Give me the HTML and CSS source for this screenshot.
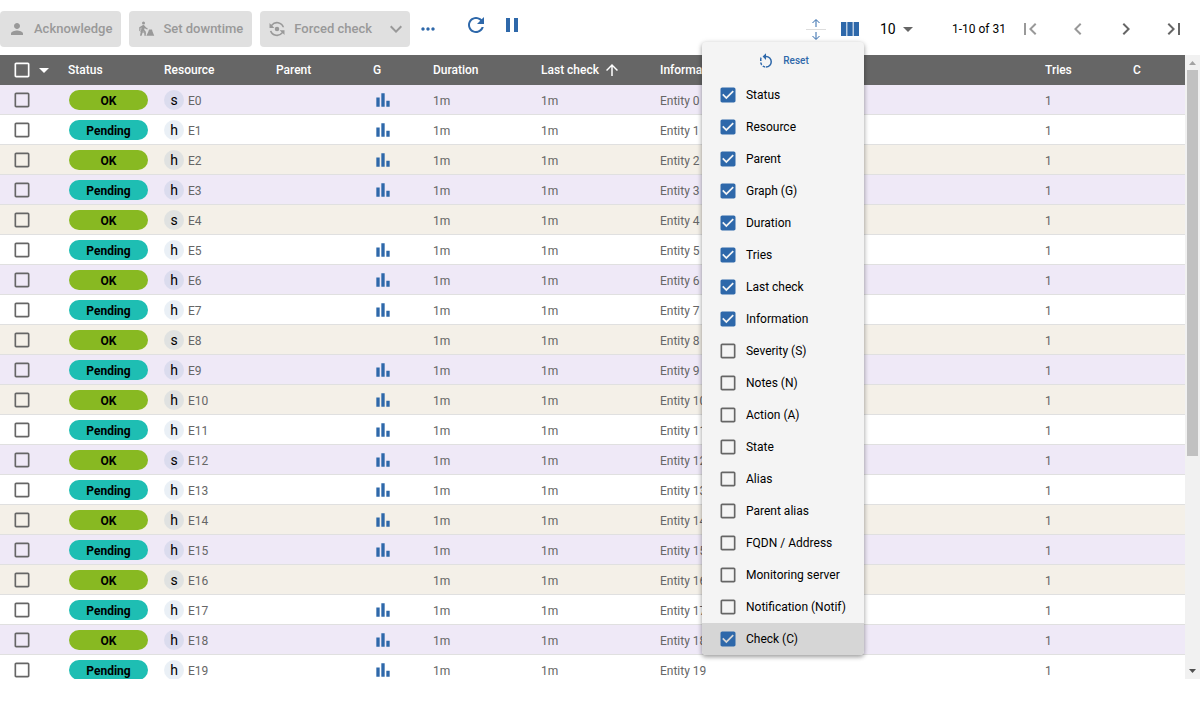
FILE: index.html
```
<!DOCTYPE html>
<html lang="en">
<head>
<meta charset="utf-8">
<meta name="viewport" content="width=device-width, initial-scale=1">
<title>Resources</title>
<link rel="stylesheet" href="styles.css">
</head>
<body>
<svg class="sprite" aria-hidden="true">
  <symbol id="graph" viewBox="0 0 24 24"><path d="M4 9h4v11H4zM16 13h4v7h-4zM10 4h4v16h-4z"/></symbol>
  <symbol id="host" viewBox="0 0 24 24"><path d="M12 12c2.200 0 4-1.800 4-4s-1.800-4-4-4-4 1.800-4 4 1.800 4 4 4zm0 2c-2.670 0-8 1.340-8 4v2h16v-2c0-2.660-5.330-4-8-4z"/></symbol>
</svg>
<main class="page">
  <header class="toolbar">
    <div class="actions">
      <button class="action" type="button" disabled>
        <svg class="icon-18" viewBox="0 0 24 24"><use href="#host"/></svg>
        <span>Acknowledge</span>
      </button>
      <button class="action" type="button" disabled>
        <svg class="icon-18" viewBox="0 0 24 24"><circle cx="8.700" cy="4" r="2"/><path d="M7.500 7 3 9.500V14h1.800v-3.300l1.200-.6L4 21h2.200l1.800-6 1.800 2v4h2v-5.200L9.600 13l.7-2.500 1.500 1.500 2.200.6v-1.800l-1.500-.5L9.800 7.400C9 6.700 8.300 6.600 7.500 7z"/><path d="M3 13.500 12 18l-.4.800L2.600 14.300zM12.500 21l2.500-5.500 1-3h4l.8 3L23 21z"/></svg>
        <span>Set downtime</span>
      </button>
      <div class="action split">
        <button class="split-main" type="button" disabled>
          <svg class="icon-18" viewBox="0 0 24 24"><path d="M21.500 9.500A10 10 0 0 0 4.200 6.200L2 4v6.500h6.500L5.700 7.700a8 8 0 0 1 13.700 2.100zM2.500 14.500a10 10 0 0 0 17.300 3.300L22 20v-6.500h-6.500l2.800 2.800a8 8 0 0 1-13.700-2.100z"/><circle cx="12" cy="12" r="3"/></svg>
          <span>Forced check</span>
        </button>
        <button class="split-toggle" type="button" aria-label="Check options" disabled>
          <svg class="icon-24" viewBox="0 0 24 24"><path d="M7.410 8.590 12 13.170l4.590-4.580L18 10l-6 6-6-6z"/></svg>
        </button>
      </div>
      <button class="icon-button more" type="button" aria-label="More actions">
        <svg class="icon-20" viewBox="0 0 24 24"><path d="M6 10c-1.100 0-2 .9-2 2s.9 2 2 2 2-.9 2-2-.9-2-2-2zm12 0c-1.100 0-2 .9-2 2s.9 2 2 2 2-.9 2-2-.9-2-2-2zm-6 0c-1.100 0-2 .9-2 2s.9 2 2 2 2-.9 2-2-.9-2-2-2z"/></svg>
      </button>
      <div class="refresh">
        <button class="icon-button" type="button" aria-label="Refresh">
          <svg class="icon-24" viewBox="0 0 24 24"><path d="M17.650 6.350C16.200 4.900 14.210 4 12 4c-4.420 0-7.990 3.580-7.990 8s3.570 8 7.990 8c3.730 0 6.840-2.550 7.730-6h-2.080c-.82 2.330-3.040 4-5.650 4-3.310 0-6-2.690-6-6s2.690-6 6-6c1.660 0 3.140.69 4.220 1.780L13 11h7V4l-2.350 2.350z"/></svg>
        </button>
        <button class="icon-button" type="button" aria-label="Pause">
          <svg class="icon-24" viewBox="0 0 24 24"><path d="M6 19h4V5H6v14zm8-14v14h4V5h-4z"/></svg>
        </button>
      </div>
    </div>
    <div class="view-tools">
      <button class="icon-button density" type="button" aria-label="Row density">
        <svg class="icon-20" viewBox="0 0 20 24"><path d="M0 12.500h20" stroke="#ddd"/><path d="M10 10V3M6.500 6 10 2.500 13.500 6M10 15v7M6.500 19l3.500 3.500 3.500-3.500" fill="none" stroke="currentColor"/></svg>
      </button>
      <div class="columns">
        <button class="icon-button columns-button" type="button" aria-label="Select columns">
          <svg class="icon-24" viewBox="0 0 24 24"><path d="M14.670 5v14H9.330V5h5.340zm1 14H21V5h-5.330v14zm-7.340 0V5H3v14h5.330z"/></svg>
        </button>
        <div class="menu">
          <button class="reset" type="button">
            <svg class="icon-18" viewBox="0 0 24 24"><path d="M12 5V1.500L7.500 6 12 10.500V7a6 6 0 0 1 0 12v2a8 8 0 0 0 0-16zM6.300 8.200 4.900 6.800A8 8 0 0 0 4.060 12H6.080c.1-1.400-.6-2.600.22-3.800zM4.060 14c.2 1.400.7 2.700 1.600 3.900l1.430-1.430A6 6 0 0 1 6.080 14zM7.100 19.300A8 8 0 0 0 11 20.900v-2a6 6 0 0 1-2.480-1.030z"/></svg>
            <span>Reset</span>
          </button>
          <label class="option"><input class="check" type="checkbox" checked>Status</label>
          <label class="option"><input class="check" type="checkbox" checked>Resource</label>
          <label class="option"><input class="check" type="checkbox" checked>Parent</label>
          <label class="option"><input class="check" type="checkbox" checked>Graph (G)</label>
          <label class="option"><input class="check" type="checkbox" checked>Duration</label>
          <label class="option"><input class="check" type="checkbox" checked>Tries</label>
          <label class="option"><input class="check" type="checkbox" checked>Last check</label>
          <label class="option"><input class="check" type="checkbox" checked>Information</label>
          <label class="option"><input class="check" type="checkbox">Severity (S)</label>
          <label class="option"><input class="check" type="checkbox">Notes (N)</label>
          <label class="option"><input class="check" type="checkbox">Action (A)</label>
          <label class="option"><input class="check" type="checkbox">State</label>
          <label class="option"><input class="check" type="checkbox">Alias</label>
          <label class="option"><input class="check" type="checkbox">Parent alias</label>
          <label class="option"><input class="check" type="checkbox">FQDN / Address</label>
          <label class="option"><input class="check" type="checkbox">Monitoring server</label>
          <label class="option"><input class="check" type="checkbox">Notification (Notif)</label>
          <label class="option current"><input class="check" type="checkbox" checked>Check (C)</label>
        </div>
      </div>
      <div class="page-size">
        <select aria-label="Rows per page"><option>10</option><option>20</option><option>30</option></select>
        <svg class="icon-24" viewBox="0 0 24 24"><path d="m7 10 5 5 5-5z"/></svg>
      </div>
      <span class="range">1-10 of 31</span>
      <nav class="pager" aria-label="Pagination">
        <button type="button" aria-label="First page" disabled><svg class="icon-24" viewBox="0 0 24 24"><path d="M18.410 16.590 13.820 12l4.590-4.590L17 6l-6 6 6 6zM6 6h2v12H6z"/></svg></button>
        <button type="button" aria-label="Previous page" disabled><svg class="icon-24" viewBox="0 0 24 24"><path d="M15.410 7.410 14 6l-6 6 6 6 1.410-1.410L10.830 12z"/></svg></button>
        <button type="button" aria-label="Next page"><svg class="icon-24" viewBox="0 0 24 24"><path d="M10 6 8.590 7.410 13.170 12l-4.580 4.590L10 18l6-6z"/></svg></button>
        <button type="button" aria-label="Last page"><svg class="icon-24" viewBox="0 0 24 24"><path d="M5.590 7.410 10.180 12l-4.590 4.590L7 18l6-6-6-6zM16 6h2v12h-2z"/></svg></button>
      </nav>
    </div>
  </header>
  <section class="listing">
    <div class="table-area">
      <table>
        <colgroup>
          <col class="col-select"><col class="col-status"><col class="col-resource"><col class="col-parent"><col class="col-graph"><col class="col-duration"><col class="col-last"><col><col class="col-tries"><col class="col-check">
        </colgroup>
        <thead>
          <tr>
            <th><div class="select-all"><input class="check light" type="checkbox" aria-label="Select all"><button type="button" aria-label="Selection options"><svg class="icon-24" viewBox="0 0 24 24"><path d="m7 10 5 5 5-5z"/></svg></button></div></th>
            <th>Status</th><th>Resource</th><th>Parent</th><th>G</th><th>Duration</th>
            <th aria-sort="ascending"><div class="sorted">Last check<svg class="icon-18" viewBox="0 0 24 24"><path d="m4 12 1.410 1.410L11 7.830V20h2V7.830l5.580 5.590L20 12l-8-8z"/></svg></div></th>
            <th>Information</th><th>Tries</th><th>C</th>
          </tr>
        </thead>
        <tbody id="rows"></tbody>
      </table>
    </div>
    <div class="scrollbar" aria-hidden="true">
      <svg viewBox="0 0 15 15"><path d="M4 10h7L7.500 6z" fill="#a3a3a3"/></svg>
      <div class="track"><div class="thumb"></div></div>
      <svg viewBox="0 0 15 15"><path d="M4 5h7L7.500 9z" fill="#505050"/></svg>
    </div>
  </section>
</main>
<script src="app.js"></script>
</body>
</html>
```
FILE: styles.css
```
* { box-sizing: border-box; }

body {
  margin: 0;
  background: #fff;
  color: #000;
  font: 12px/16px Roboto, "Liberation Sans", sans-serif;
}

button, input, select { margin: 0; font: inherit; color: inherit; }
button { padding: 0; border: 0; background: none; }
svg { display: block; flex: none; fill: currentColor; }

.sprite { position: absolute; width: 0; height: 0; }
.icon-18 { width: 18px; height: 18px; }
.icon-20 { width: 20px; height: 20px; }
.icon-24 { width: 24px; height: 24px; }

.page {
  display: flex;
  flex-direction: column;
  height: 100vh;
  padding-bottom: 41px;
}

.toolbar {
  display: flex;
  align-items: center;
  justify-content: space-between;
  height: 55px;
  padding: 3px 2px 0 0;
}

.actions, .view-tools, .refresh, .pager { display: flex; align-items: center; }

.action {
  display: flex;
  align-items: center;
  gap: 8px;
  height: 36px;
  margin-right: 8px;
  padding: 0 9px 0 8px;
  border-radius: 4px;
  background: #e0e0e0;
  color: #999;
  font-size: 13px;
  font-weight: 500;
}

.split { gap: 0; padding-right: 2px; }
.split-main { display: flex; align-items: center; gap: 8px; }
.split-toggle { margin-left: 12px; }

.icon-button { display: flex; align-items: center; justify-content: center; color: #2e68aa; }
.more { width: 20px; }
.refresh { gap: 12px; margin-left: 26px; padding-bottom: 8px; }

.density { width: 20px; }
.density svg { height: 24px; }
.columns { position: relative; margin-left: 10px; }
.columns-button { width: 28px; height: 24px; }

.menu {
  position: absolute;
  z-index: 2;
  top: 25px;
  right: 0;
  width: max-content;
  min-width: 162px;
  border-radius: 4px;
  background: #f4f4f4;
  box-shadow: 0 2px 4px rgba(0, 0, 0, .3), 0 1px 6px rgba(0, 0, 0, .14);
  overflow: hidden;
}

.reset {
  display: flex;
  align-items: center;
  justify-content: center;
  gap: 8px;
  width: 100%;
  height: 37px;
  color: #2e68aa;
  font-size: 10px;
  font-weight: 500;
}

.option {
  display: flex;
  align-items: center;
  gap: 8px;
  height: 32px;
  padding: 0 16px;
}

.current { background: #d6d6d6; }

.check {
  appearance: none;
  flex: none;
  display: block;
  width: 20px;
  height: 20px;
  background: url("data:image/svg+xml,%3Csvg xmlns='http://www.w3.org/2000/svg' viewBox='0 0 24 24' fill='%23666'%3E%3Cpath d='M19 5v14H5V5h14m0-2H5c-1.100 0-2 .9-2 2v14c0 1.100.9 2 2 2h14c1.100 0 2-.9 2-2V5c0-1.100-.9-2-2-2z'/%3E%3C/svg%3E") center / 20px no-repeat;
}

.check.light {
  background-image: url("data:image/svg+xml,%3Csvg xmlns='http://www.w3.org/2000/svg' viewBox='0 0 24 24' fill='%23fff'%3E%3Cpath d='M19 5v14H5V5h14m0-2H5c-1.100 0-2 .9-2 2v14c0 1.100.9 2 2 2h14c1.100 0 2-.9 2-2V5c0-1.100-.9-2-2-2z'/%3E%3C/svg%3E");
}

.check:checked {
  background-image: url("data:image/svg+xml,%3Csvg xmlns='http://www.w3.org/2000/svg' viewBox='0 0 24 24' fill='%232e68aa'%3E%3Cpath d='M19 3H5c-1.110 0-2 .9-2 2v14c0 1.100.89 2 2 2h14c1.110 0 2-.9 2-2V5c0-1.100-.89-2-2-2zm-9 14l-5-5 1.410-1.410L10 14.170l7.590-7.590L19 8l-9 9z'/%3E%3C/svg%3E");
}

.page-size { display: flex; align-items: center; margin-left: 16px; color: #666; }
.page-size select {
  appearance: none;
  width: 16px;
  padding: 0;
  border: 0;
  background: none;
  color: #000;
  font-size: 14px;
}

.range { margin-left: 32px; }
.pager button { display: grid; place-items: center; width: 48px; height: 24px; color: #666; }
.pager button:disabled { color: #999; }

.listing { display: flex; flex: 1; min-height: 0; }
.table-area { flex: 1; min-width: 0; overflow: hidden; }

table { width: 100%; table-layout: fixed; border-collapse: separate; border-spacing: 0; }
.col-select { width: 68px; }
.col-status { width: 96px; }
.col-resource { width: 112px; }
.col-parent { width: 97px; }
.col-graph { width: 60px; }
.col-duration { width: 108px; }
.col-last { width: 119px; }
.col-tries { width: 88px; }
.col-check { width: 52px; }

th, td { height: 30px; padding: 0; text-align: left; white-space: nowrap; }
th { background: #666; color: #fff; font-weight: 500; }
td { border-bottom: 1px solid #e0e0e0; color: #666; }

.even td { background: #f4f0e8; }
.highlight td { background: #efe9f7; }

td.text, .name { padding-top: 2px; }

.select-all { display: flex; align-items: center; padding-left: 12px; }
.sorted { display: flex; align-items: center; gap: 4px; }
td .check { margin-left: 12px; }
td .icon-20 { color: #2e68aa; }

.status {
  width: 79px;
  height: 20px;
  margin-left: 1px;
  border-radius: 10px;
  color: #000;
  font-weight: 700;
  line-height: 22px;
  text-align: center;
}

.ok { background: #88b922; }
.pending { background: #1ebeb3; }

.resource { display: flex; align-items: center; gap: 4px; }
.type {
  width: 20px;
  height: 20px;
  border-radius: 50%;
  background: rgba(46, 104, 170, .1);
  color: #000;
  font-size: 14px;
  line-height: 20px;
  text-align: center;
}

.scrollbar { display: flex; flex-direction: column; width: 15px; background: #f1f1f1; }
.scrollbar svg { width: 15px; height: 15px; }
.track { flex: 1; padding: 0 2px; }
.thumb { height: 65%; background: #c1c1c1; }
```
FILE: app.js
```
const noGraph = [4, 8, 16];
const body = document.getElementById("rows");

for (let i = 0; i < 20; i++) {
  const row = document.createElement("tr");
  row.className = i % 3 === 0 ? "highlight" : i % 2 === 0 ? "even" : "";
  const status = i % 2 === 0 ? "OK" : "Pending";
  const graph = noGraph.includes(i) ? "" : '<svg class="icon-20"><use href="#graph"/></svg>';
  row.innerHTML = `
    <td><input class="check" type="checkbox" aria-label="Select E${i}"></td>
    <td><div class="status ${status.toLowerCase()}">${status}</div></td>
    <td><div class="resource"><span class="type">${i % 4 === 0 ? "s" : "h"}</span><span class="name">E${i}</span></div></td>
    <td></td>
    <td>${graph}</td>
    <td class="text">1m</td>
    <td class="text">1m</td>
    <td class="text">Entity ${i}</td>
    <td class="text">1</td>
    <td></td>`;
  body.append(row);
}
```
